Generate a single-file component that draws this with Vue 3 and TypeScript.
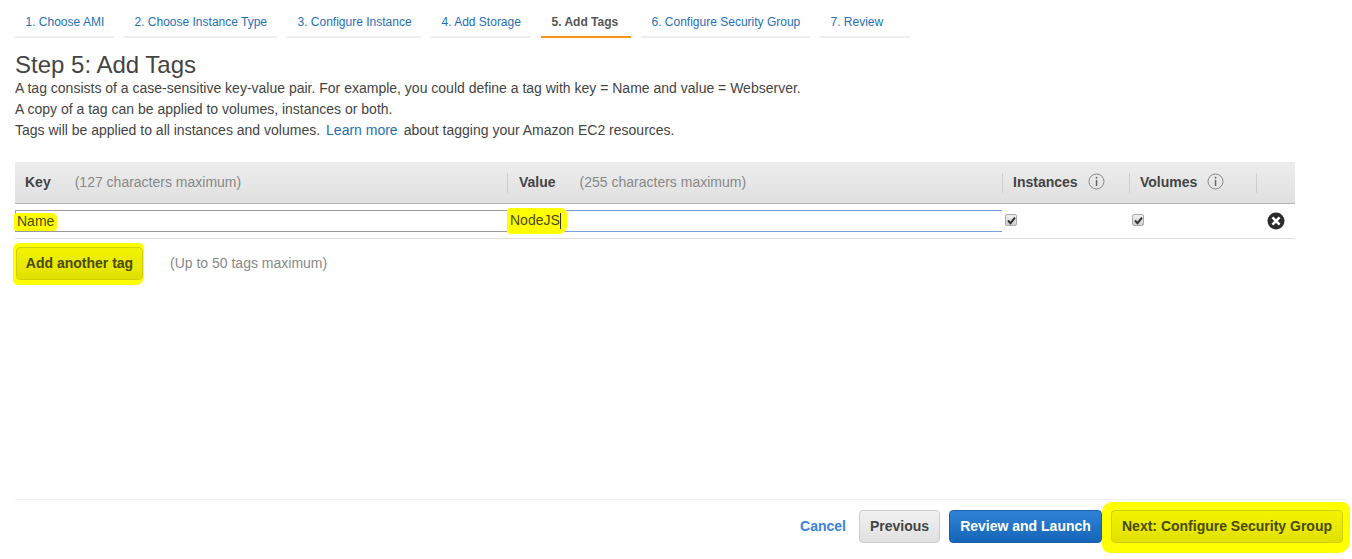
<script setup lang="ts">
const steps = [
  { label: '1. Choose AMI', width: 99 },
  { label: '2. Choose Instance Type', width: 153 },
  { label: '3. Configure Instance', width: 134 },
  { label: '4. Add Storage', width: 100 },
  { label: '5. Add Tags', width: 90, active: true },
  { label: '6. Configure Security Group', width: 169 },
  { label: '7. Review', width: 90 },
]
</script>

<template>
  <div class="page">
    <nav class="steps">
      <a v-for="s in steps" :key="s.label" class="step" :class="{ active: s.active }" :style="{ width: s.width + 'px' }">{{ s.label }}</a>
    </nav>

    <h1 class="title">Step 5: Add Tags</h1>
    <p class="copy">A tag consists of a case-sensitive key-value pair. For example, you could define a tag with key = Name and value = Webserver.</p>
    <p class="copy">A copy of a tag can be applied to volumes, instances or both.</p>
    <p class="copy">Tags will be applied to all instances and volumes.<a class="learn">Learn more</a>about tagging your Amazon EC2 resources.</p>

    <section class="table">
      <div class="row head">
        <div class="cell key"><b>Key</b><span class="hint">(127 characters maximum)</span></div>
        <div class="cell value sep"><b>Value</b><span class="hint">(255 characters maximum)</span></div>
        <div class="cell inst sep"><b>Instances</b>
          <svg class="info" width="17" height="17" viewBox="0 0 17 17"><circle cx="8.5" cy="8.5" r="7.5" fill="none" stroke="#888" stroke-width="1"/><rect x="7.8" y="3.8" width="1.5" height="1.8" fill="#666"/><rect x="7.8" y="7" width="1.5" height="6" fill="#666"/></svg>
        </div>
        <div class="cell vol sep"><b>Volumes</b>
          <svg class="info" width="17" height="17" viewBox="0 0 17 17"><circle cx="8.5" cy="8.5" r="7.5" fill="none" stroke="#888" stroke-width="1"/><rect x="7.8" y="3.8" width="1.5" height="1.8" fill="#666"/><rect x="7.8" y="7" width="1.5" height="6" fill="#666"/></svg>
        </div>
        <div class="cell end sep"></div>
      </div>
      <div class="row body">
        <div class="key"><div class="field"><mark class="hl">Name</mark></div></div>
        <div class="value"><div class="field focus"><mark class="hl hl-v">NodeJS<i class="caret"></i></mark></div></div>
        <div class="inst"><span class="check"><svg width="11" height="11" viewBox="0 0 11 11"><path d="M2 5.5 L4.5 8.2 L9 2.6" fill="none" stroke="#333" stroke-width="2"/></svg></span></div>
        <div class="vol"><span class="check"><svg width="11" height="11" viewBox="0 0 11 11"><path d="M2 5.5 L4.5 8.2 L9 2.6" fill="none" stroke="#333" stroke-width="2"/></svg></span></div>
        <div class="end remove">
          <svg width="18" height="18" viewBox="0 0 18 18"><circle cx="9" cy="9" r="8.5" fill="#2b2b2b"/><path d="M5.4 5.4 L12.6 12.6 M12.6 5.4 L5.4 12.6" stroke="#fff" stroke-width="2.6"/></svg>
        </div>
      </div>
    </section>

    <div class="add-row">
      <span class="marker add-marker"><button class="btn yellow add">Add another tag</button></span>
      <span class="hint limit">(Up to 50 tags maximum)</span>
    </div>

    <footer class="footer">
      <a class="cancel">Cancel</a>
      <button class="btn prev">Previous</button>
      <button class="btn primary">Review and Launch</button>
      <span class="marker next-marker"><button class="btn yellow next">Next: Configure Security Group</button></span>
    </footer>
  </div>
</template>

<style>
html, body { margin: 0; background: #fff; overflow: hidden; }
</style>

<style scoped>
.page {
  box-sizing: border-box;
  width: 1352px;
  height: 559px;
  padding: 0 5px 0 15px;
  display: flex;
  flex-direction: column;
  font-family: "Liberation Sans", Arial, sans-serif;
  color: #444;
  font-size: 14px;
  overflow: hidden;
}
.steps { display: flex; gap: 10px; height: 38px; }
.step {
  box-sizing: border-box;
  height: 38px;
  padding: 15px 0 0 10.5px;
  font-size: 12px;
  line-height: 14px;
  color: #1f6fb5;
  border-bottom: 2px solid #eee;
  white-space: nowrap;
}
.step.active { color: #555; font-weight: 700; border-bottom-color: #f7941d; }
.title { margin: 13px 0 -1px; font-size: 24px; line-height: 28px; font-weight: 400; color: #444; }
.copy { margin: 0; line-height: 21px; height: 21px; white-space: nowrap; }
.learn { color: #1f6fb5; margin: 0 6px; }
.table { width: 1280px; margin-top: 21px; }
.row { display: grid; grid-template-columns: 492px 495px 127px 127px 39px; }
.head {
  height: 41px;
  background: linear-gradient(#ededed, #e0e0e0);
  border-bottom: 1px solid #b4b4b4;
  align-items: center;
}
.cell {
  box-sizing: border-box;
  display: flex;
  align-items: center;
  height: 20px;
  padding: 0 0 2px 10px;
  white-space: nowrap;
}
.cell b { color: #444; }
.sep { border-left: 1px solid #cfcfcf; }
.value.cell { padding-left: 11px; }
.hint { color: #888; }
.cell .hint { margin-left: 24px; }
.info { margin-left: 10px; }
.body { height: 34px; border-bottom: 1px solid #ddd; align-items: start; }
.field {
  box-sizing: border-box;
  height: 22px;
  margin-top: 6px;
  border: 1px solid #999;
  border-right: 0;
  padding-left: 1px;
  line-height: 20px;
  background: #fff;
  display: flex;
  align-items: center;
  color: #444;
}
.value .field { border-left: 0; padding-left: 2px; }
.focus { border-color: #7a9ddb; }
.hl {
  background: #ffff00;
  color: #4a4a10;
  box-sizing: border-box;
  height: 18px;
  line-height: 16px;
  margin: 1px 0 -1px -3px;
  padding: 0 3px;
  border-radius: 3px 5px 4px 2px;
}
.hl-v {
  position: relative;
  height: 26px;
  line-height: 24px;
  margin: 0 0 0 -2px;
  padding: 0 7px 0 3px;
  border-radius: 4px 6px 8px 3px;
}
.caret {
  position: absolute;
  left: 53px;
  top: 5px;
  width: 1px;
  height: 16px;
  background: #333;
}
.cell.inst, .cell.vol { padding-left: 10px; }
.body .inst, .body .vol { padding: 10px 0 0 3px; }
.check {
  box-sizing: border-box;
  display: block;
  width: 12px;
  height: 12px;
  background: linear-gradient(#f0f0f0, #cfcfcf);
  border: 1px solid #aaa;
  border-radius: 2px;
}
.check svg { display: block; margin: -0.5px; }
.remove { padding: 8px 0 0 10.5px; }
.remove svg { display: block; }
.add-row { display: flex; align-items: center; margin-top: 8px; height: 33px; }
.limit { margin: 0 0 2px 27px; }
.marker { position: relative; display: flex; }
.marker::before {
  content: "";
  position: absolute;
  background: #ffff00;
}
.add-marker { margin-left: 1px; }
.add-marker::before { inset: -4px -1px -5px -3px; border-radius: 6px 5px 8px 5px; }
.next-marker::before { inset: -8px -7px -10px -9px; border-radius: 10px 8px 12px 8px; }
.btn {
  box-sizing: border-box;
  height: 33px;
  padding: 0 0 2px;
  font-family: inherit;
  font-size: 14px;
  font-weight: 700;
  border-radius: 4px;
  white-space: nowrap;
  position: relative;
}
.yellow {
  background: linear-gradient(#f3f300, #e0e000);
  border: 1px solid #d0d000;
  color: #4a4a00;
}
.add { width: 127px; }
.footer {
  margin-top: auto;
  margin-bottom: 16px;
  border-top: 1px solid #eee;
  height: 33px;
  padding: 10px 4px 0 0;
  display: flex;
  align-items: center;
  justify-content: flex-end;
}
.prev, .primary, .next-marker { margin-left: 9px; }
.cancel { font-weight: 700; color: #3b82d8; margin: 0 4px 2px 0; }
.prev {
  width: 81px;
  background: linear-gradient(#f1f1f1, #e0e0e0);
  border: 1px solid #ccc;
  color: #444;
}
.primary {
  width: 153px;
  background: linear-gradient(#2f83d6, #1565b8);
  border: 1px solid #1a5fa8;
  color: #fff;
}
.next { width: 232px; }
</style>
